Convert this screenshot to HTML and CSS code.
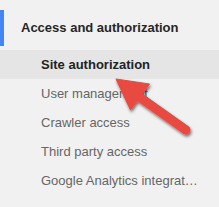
FILE: index.html
```html
<!DOCTYPE html>
<html lang="en">
<head>
  <meta charset="UTF-8" />
  <title>Access and authorization</title>
  <link rel="stylesheet" href="styles.css">
</head>
<body>
  <div class="sidebar">
    <div class="section-title">Access and authorization</div>
    <ul class="menu">
      <li class="menu-item active">Site authorization</li>
      <li class="menu-item">User management</li>
      <li class="menu-item">Crawler access</li>
      <li class="menu-item">Third party access</li>
      <li class="menu-item">Google Analytics integration</li>
    </ul>
  </div>

  <svg class="arrow" width="219" height="207" viewBox="0 0 219 207">
    <defs>
      <filter id="shadow" x="-20%" y="-20%" width="140%" height="140%">
        <feDropShadow dx="1" dy="2" stdDeviation="1.5" flood-color="#000" flood-opacity="0.55" />
      </filter>
    </defs>
    <g filter="url(#shadow)" fill="#e8493f" stroke="#e8493f">
      <line x1="138" y1="96" x2="186" y2="130" stroke-width="9" stroke-linecap="round" />
      <polygon points="116,79 149.5,84 130.5,110" stroke-width="1" stroke-linejoin="round" />
    </g>
  </svg>
</body>
</html>
```

FILE: styles.css
```css
body {
  margin: 0;
  background: #f1f1f1;
  font-family: 'Liberation Sans', Arial, sans-serif;
  font-size: 13px;
}
.sidebar {
  width: 219px;
  padding-top: 10px;
}
.section-title {
  border-left: 4px solid #4285f4;
  height: 36px;
  line-height: 36px;
  padding-left: 17px;
  font-weight: bold;
  color: #262626;
  margin-bottom: 4px;
}
.menu {
  list-style: none;
  margin: 0;
  padding: 0;
}
.menu-item {
  height: 29px;
  line-height: 30px;
  padding: 0 20px 0 41px;
  color: #666;
  white-space: nowrap;
  overflow: hidden;
  text-overflow: ellipsis;
}
.menu-item.active {
  background: #e5e5e5;
  color: #222;
  font-weight: bold;
  line-height: 29px;
}
.arrow {
  position: absolute;
  left: 0;
  top: 0;
}
```
